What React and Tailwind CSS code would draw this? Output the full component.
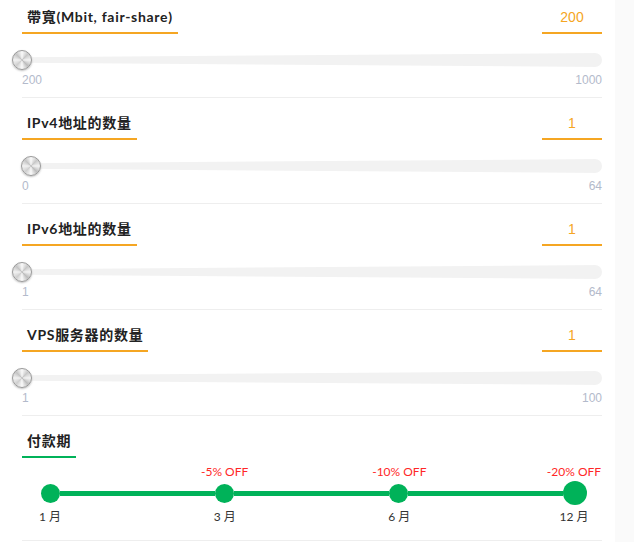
import React from 'react';

const SLIDERS = [
  { label: '帶寬(Mbit, fair-share)', value: 200, min: 200, max: 1000 },
  { label: 'IPv4地址的数量', value: 1, min: 0, max: 64 },
  { label: 'IPv6地址的数量', value: 1, min: 1, max: 64 },
  { label: 'VPS服务器的数量', value: 1, min: 1, max: 100 },
];

const PERIODS = [
  { label: '1 月', off: '', big: false },
  { label: '3 月', off: '-5% OFF', big: false },
  { label: '6 月', off: '-10% OFF', big: false },
  { label: '12 月', off: '-20% OFF', big: true },
];

const latoFont = "font-['Lato','Noto_Sans_CJK_SC',sans-serif]";
const arialFont = "font-['Liberation_Sans',Arial,sans-serif]";

const Title = ({ children, color }) => (
  <div className={`px-[5px] pb-[5px] border-b-2 ${color} text-[14px] tracking-[0.7px] leading-[20px] font-bold text-[#222] ${latoFont}`}>
    {children}
  </div>
);

const SliderSection = ({ label, value, min, max }) => {
  const pct = ((value - min) / (max - min)) * 100;
  return (
    <div className="pt-[15px] border-b border-[#eeeeee]">
      <div className="flex items-end justify-between">
        <Title color="border-[#f5a623]">{label}</Title>
        <div className={`w-[60px] pb-[5px] border-b-2 border-[#f5a623] text-center text-[14px] leading-[20px] text-[#f5a623] ${arialFont}`}>
          {value}
        </div>
      </div>

      {/* slider */}
      <div className="relative mt-[16px] h-[20px] flex items-center">
        <div className="w-full h-[14px] rounded-full bg-[#f2f2f2] [clip-path:polygon(0_30%,100%_0,100%_100%,0_70%)]" />
        {pct > 0 && (
          <div
            className="absolute left-0 top-[7px] h-[6px] bg-[#f5a623]"
            style={{ width: `${pct}%` }}
          />
        )}
        <div
          className="absolute top-0 -ml-[10px] w-[20px] h-[20px] rounded-full border border-[#9a9a9a] bg-[conic-gradient(#fafafa,#c8c8c8,#f4f4f4,#bdbdbd,#fafafa,#cfcfcf,#f2f2f2,#c4c4c4,#fafafa)] shadow-[0_1px_2px_rgba(0,0,0,0.25)]"
          style={{ left: `${pct}%` }}
        />
      </div>

      <div className={`mt-[2px] mb-[9px] flex justify-between text-[12px] leading-[16px] text-[#b3bacb] ${arialFont}`}>
        <span>{min}</span>
        <span>{max}</span>
      </div>
    </div>
  );
};

const PaymentSection = () => (
  <div className="pt-[15px] border-b border-[#eeeeee]">
    <div className="flex">
      <Title color="border-[#00b259]">付款期</Title>
    </div>

    <div className={`mt-[6px] flex justify-between text-[12px] leading-[16px] text-[#ff2727] ${latoFont}`}>
      {PERIODS.map((p) => (
        <div key={p.label} className="w-[56px] flex justify-center whitespace-nowrap">{p.off}</div>
      ))}
    </div>

    <div className="mt-[1px] h-[24px] pl-[19px] pr-[15px] flex items-center">
      {PERIODS.map((p, i) => (
        <React.Fragment key={p.label}>
          {i > 0 && <div className="flex-1 h-[5px] bg-[#00b259]" />}
          <div className={`${p.big ? 'w-[24px] h-[24px]' : 'w-[19px] h-[19px]'} rounded-full bg-[#00b259] shrink-0`} />
        </React.Fragment>
      ))}
    </div>

    <div className={`mt-[4px] mb-[15px] flex justify-between text-[12px] leading-[16px] text-[#333] ${latoFont}`}>
      {PERIODS.map((p) => (
        <div key={p.label} className="w-[56px] flex justify-center whitespace-nowrap">{p.label}</div>
      ))}
    </div>
  </div>
);

export default function App() {
  return (
    <div className="flex h-[542px] overflow-hidden bg-white">
      <div className="w-[615px] pl-[22px] pr-[13px]">
        <div className="-mt-[8px]">
          {SLIDERS.map((s) => (
            <SliderSection key={s.label} {...s} />
          ))}
          <PaymentSection />
        </div>
      </div>
      <div className="flex-1 bg-[#fafafa]" />
    </div>
  );
}
